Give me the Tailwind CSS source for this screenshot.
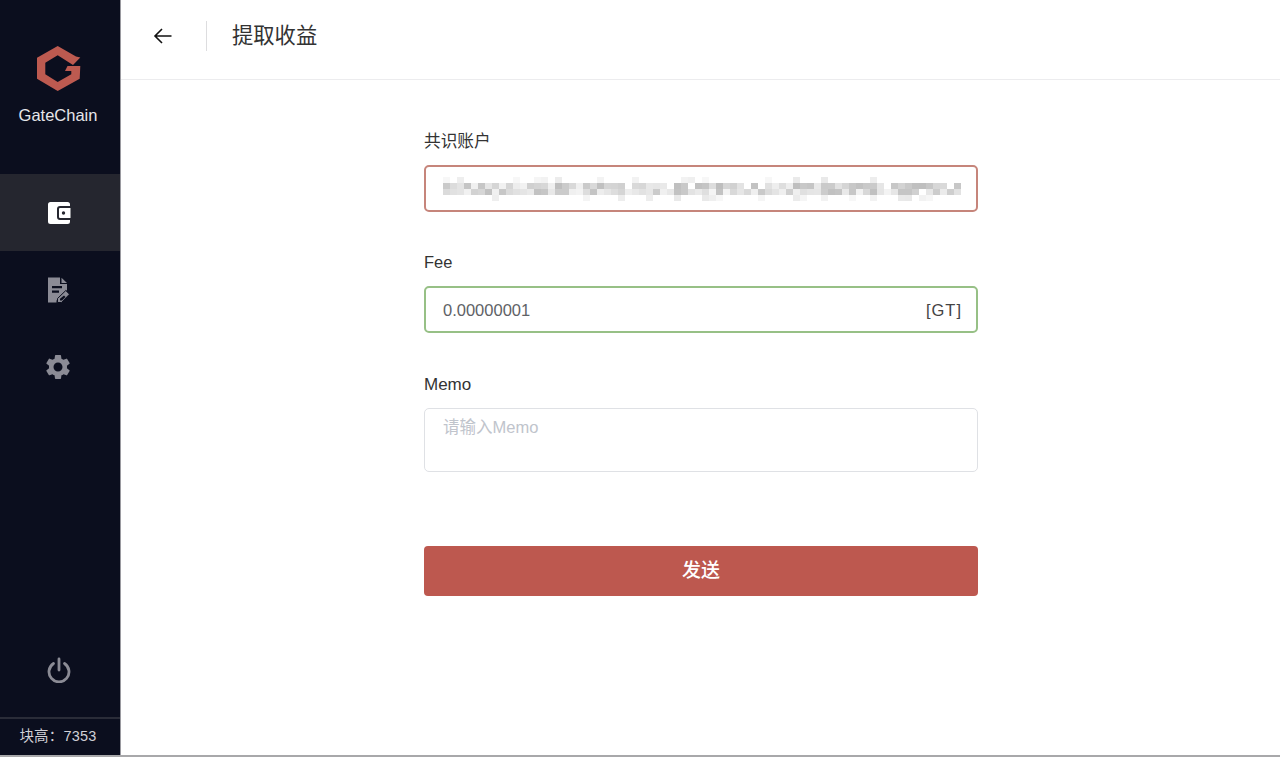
<!DOCTYPE html>
<html lang="zh-CN">
<head>
    <meta charset="UTF-8">
    <title>提取收益</title>
    <script src="https://cdn.jsdelivr.net/npm/@tailwindcss/browser@4"></script>
</head>
<body class="bg-white overflow-hidden font-['Liberation_Sans','Noto_Sans_CJK_SC',sans-serif]">
    <div class="flex h-[755px]">
        <!-- sidebar -->
        <aside class="w-[121px] shrink-0 flex flex-col bg-[#0b0e1e] border-r border-[#9a9aa0]">
            <div class="h-[174px] pr-[3px] flex flex-col items-center">
                <svg class="mt-[46px] w-[44px] h-[46px]" viewBox="0 0 44 46">
                    <path fill="#bd5a50" d="M20.700 0 39 10.500 43.300 11.500 36 19 20.700 9.300 8.300 16.700V28.300L20.700 36 34.300 28.300V25H28L30.500 20H43.300L42.700 32.700 20.700 45 0 32.700V11.700Z"/>
                </svg>
                <span class="mt-[13px] mr-[1px] text-[16.500px] leading-[20px] text-[#e6e6ea]">GateChain</span>
            </div>
            <a class="h-[77px] pr-[2px] flex items-center justify-center bg-[#25262f]">
                <svg class="w-[24px] h-[24px]" viewBox="0 0 24 24">
                    <path fill="#fff" d="M3.500 1H20.500A2.500 2.500 0 0 1 23 3.500V5H13A3 3 0 0 0 10 8V16A3 3 0 0 0 13 19H23V20.500A2.500 2.500 0 0 1 20.500 23H3.500A2.500 2.500 0 0 1 1 20.500V3.500A2.500 2.500 0 0 1 3.500 1Z"/>
                    <path fill="#fff" d="M13 7H23.500V17H13A1 1 0 0 1 12 16V8A1 1 0 0 1 13 7Z"/>
                    <circle cx="16.500" cy="12" r="1.700" fill="#25262f"/>
                </svg>
            </a>
            <a class="h-[77px] pr-[4px] flex items-center justify-center">
                <svg class="w-[24px] h-[26px]" viewBox="0 0 24 26">
                    <path fill="#8b8b95" d="M2 0.500H14V7H21V13L10.500 23.500V25.500H2Z"/>
                    <path fill="#8b8b95" d="M15.500 0.800 21 6H15.500Z"/>
                    <path fill="#0b0e1e" d="M6 9H16V11.200H6ZM6 13.500H13V15.700H6Z"/>
                    <path fill="#8b8b95" stroke="#0b0e1e" stroke-width="1" d="M19.800 13.500 23.500 17.200 15.500 25.500H11.500V21.500Z"/>
                    <path fill="#0b0e1e" d="M18 18.500 19.500 20 16 23.500H14V21.800Z"/>
                </svg>
            </a>
            <a class="h-[77px] pr-[4px] flex items-center justify-center">
                <svg class="w-[30px] h-[30px]" viewBox="0 0 24 24">
                    <path fill="#8b8b95" d="M19.140 12.940c.04-.3.060-.61.060-.94 0-.32-.020-.64-.070-.94l2.030-1.580a.49.49 0 0 0 .120-.61l-1.920-3.320a.488.488 0 0 0-.59-.22l-2.390.96c-.5-.38-1.030-.7-1.620-.94l-.36-2.540a.484.484 0 0 0-.48-.41h-3.840c-.24 0-.43.170-.47.410l-.36 2.540c-.59.240-1.130.57-1.620.94l-2.390-.96c-.22-.080-.47 0-.59.220L2.740 8.870c-.12.210-.080.470.120.610l2.030 1.580c-.05.3-.090.630-.090.940s.020.640.070.940l-2.030 1.580a.49.49 0 0 0-.120.610l1.920 3.320c.12.220.37.290.59.220l2.390-.96c.5.380 1.030.7 1.620.94l.36 2.540c.05.240.24.410.48.410h3.840c.24 0 .44-.170.47-.41l.36-2.540c.59-.240 1.130-.56 1.620-.94l2.390.96c.22.080.47 0 .59-.220l1.920-3.320c.12-.22.070-.47-.120-.61l-2.010-1.580zM12 15.600c-1.980 0-3.600-1.620-3.600-3.600s1.620-3.600 3.600-3.600 3.600 1.620 3.600 3.600-1.620 3.600-3.600 3.600z"/>
                </svg>
            </a>
            <div class="flex-1 pr-[3px] flex items-end justify-center pb-[34px]">
                <svg class="w-[24px] h-[26px]" viewBox="0 0 24 26" fill="none" stroke="#8b8b95" stroke-width="2.800" stroke-linecap="round">
                    <path d="M12 2V13"/>
                    <path d="M6.500 6.500A10 10 0 1 0 17.500 6.500"/>
                </svg>
            </div>
            <div class="h-[38px] pr-[4px] border-t-2 border-[#2a2c38] flex items-center justify-center text-[14.500px] text-[#d0d0d6] tracking-[0.2px]">块高：7353</div>
        </aside>

        <main class="flex-1 min-w-0">
            <!-- header -->
            <header class="h-[80px] pb-[8px] border-b border-[#ececee] flex items-center">
                <button class="ml-[32px] w-[20px] h-[20px] flex items-center justify-center">
                    <svg class="w-[20px] h-[20px]" viewBox="0 0 20 20" fill="none" stroke="#111" stroke-width="1.600">
                        <path d="M18.500 10H2M9 3 2 10 9 17"/>
                    </svg>
                </button>
                <div class="ml-[33px] w-px h-[30px] bg-[#dddddf]"></div>
                <h1 class="ml-[25px] pt-[3px] text-[21.300px] text-[#333] font-normal">提取收益</h1>
            </header>

            <form class="w-[554px] ml-[303px] pt-[51px]">
                <label class="block h-[22px] leading-[22px] text-[16.700px] text-[#333]">共识账户</label>
                <div class="mt-[12px] h-[47px] border-2 border-[#c6857b] rounded-[5px] flex items-center pl-[17px]">
                    <svg id="blurred" class="w-[518px] h-[26px]" viewBox="0 0 518 26" filter="url(#soft)">
                        <defs><filter id="soft"><feGaussianBlur stdDeviation="0.700"/></filter></defs>
                    </svg>
                </div>

                <label class="block mt-[39px] h-[22px] leading-[22px] text-[16.500px] text-[#333]">Fee</label>
                <div class="mt-[13px] h-[47px] border-2 border-[#97c086] rounded-[5px] flex items-center pl-[17px] pr-[14px]">
                    <input class="flex-1 min-w-0 pt-[2px] outline-none text-[16.500px] text-[#606266] bg-transparent" value="0.00000001">
                    <span class="pt-[1px] text-[16.500px] text-[#444] tracking-[1px]">[GT]</span>
                </div>

                <label class="block mt-[41px] h-[22px] leading-[22px] text-[17px] text-[#333]">Memo</label>
                <textarea class="block mt-[12px] w-full h-[64px] border-[1.500px] border-[#dfe1e5] rounded-[5px] px-[18px] py-[6px] text-[16.500px] leading-[24px] outline-none resize-none placeholder:text-[#c0c4cc]" placeholder="请输入Memo"></textarea>

                <button type="button" class="block mt-[74px] w-full h-[50px] rounded-[4px] bg-[#bd584f] text-white text-[19px] font-medium">发送</button>
            </form>
        </main>
    </div>
    <div class="h-[2px] bg-[#a8a8aa]"></div>

    <script>
        // pixelated account address
        var svg = document.getElementById('blurred');
        var seed = 7;
        function rnd() { seed = (seed * 16807) % 2147483647; return seed / 2147483647; }
        for (var x = 0; x < 518; x += 7) {
            for (var row = 0; row < 4; row++) {
                var chance = row === 1 || row === 2 ? 0.95 : 0.25;
                if (rnd() > chance) continue;
                var shade = Math.round(row === 1 || row === 2 ? 190 + rnd() * 55 : 232 + rnd() * 16);
                var r = document.createElementNS('http://www.w3.org/2000/svg', 'rect');
                r.setAttribute('x', x);
                r.setAttribute('y', 1 + row * 6);
                r.setAttribute('width', 7);
                r.setAttribute('height', 6);
                r.setAttribute('fill', 'rgb(' + shade + ',' + shade + ',' + shade + ')');
                svg.appendChild(r);
            }
        }
    </script>
</body>
</html>
